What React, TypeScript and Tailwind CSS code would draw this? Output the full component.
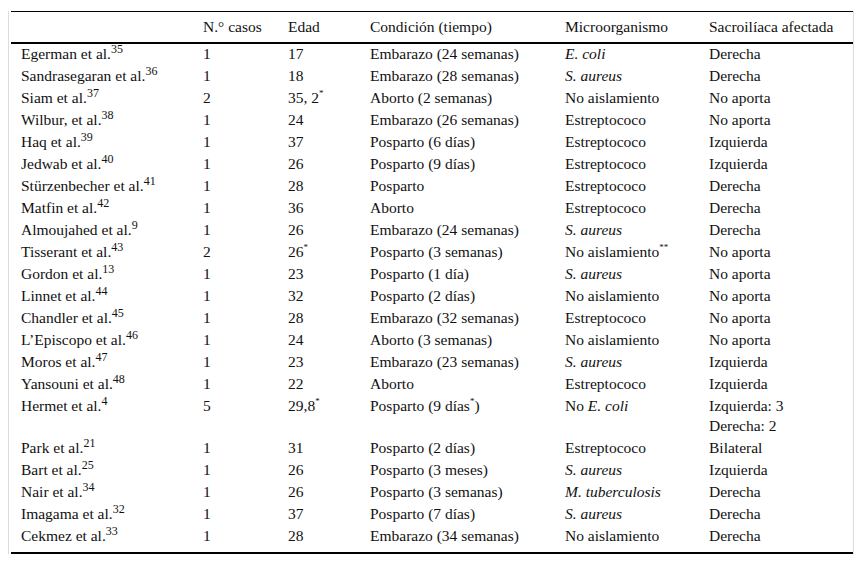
import type { ReactNode } from 'react'

type Row = {
  author: string
  refNum: string
  cases: string
  age: ReactNode
  condition: ReactNode
  organism: ReactNode
  side: ReactNode
}

const Star = ({ n = 1 }: { n?: number }) => (
  <sup className="text-[9px] -top-[0.8em]">{'*'.repeat(n)}</sup>
)

const rows: Row[] = [
  { author: 'Egerman et al.', refNum: '35', cases: '1', age: '17', condition: 'Embarazo (24 semanas)', organism: <i>E. coli</i>, side: 'Derecha' },
  { author: 'Sandrasegaran et al.', refNum: '36', cases: '1', age: '18', condition: 'Embarazo (28 semanas)', organism: <i>S. aureus</i>, side: 'Derecha' },
  { author: 'Siam et al.', refNum: '37', cases: '2', age: <>35, 2<Star /></>, condition: 'Aborto (2 semanas)', organism: 'No aislamiento', side: 'No aporta' },
  { author: 'Wilbur, et al.', refNum: '38', cases: '1', age: '24', condition: 'Embarazo (26 semanas)', organism: 'Estreptococo', side: 'No aporta' },
  { author: 'Haq et al.', refNum: '39', cases: '1', age: '37', condition: 'Posparto (6 días)', organism: 'Estreptococo', side: 'Izquierda' },
  { author: 'Jedwab et al.', refNum: '40', cases: '1', age: '26', condition: 'Posparto (9 días)', organism: 'Estreptococo', side: 'Izquierda' },
  { author: 'Stürzenbecher et al.', refNum: '41', cases: '1', age: '28', condition: 'Posparto', organism: 'Estreptococo', side: 'Derecha' },
  { author: 'Matfin et al.', refNum: '42', cases: '1', age: '36', condition: 'Aborto', organism: 'Estreptococo', side: 'Derecha' },
  { author: 'Almoujahed et al.', refNum: '9', cases: '1', age: '26', condition: 'Embarazo (24 semanas)', organism: <i>S. aureus</i>, side: 'Derecha' },
  { author: 'Tisserant et al.', refNum: '43', cases: '2', age: <>26<Star /></>, condition: 'Posparto (3 semanas)', organism: <>No aislamiento<Star n={2} /></>, side: 'No aporta' },
  { author: 'Gordon et al.', refNum: '13', cases: '1', age: '23', condition: 'Posparto (1 día)', organism: <i>S. aureus</i>, side: 'No aporta' },
  { author: 'Linnet et al.', refNum: '44', cases: '1', age: '32', condition: 'Posparto (2 días)', organism: 'No aislamiento', side: 'No aporta' },
  { author: 'Chandler et al.', refNum: '45', cases: '1', age: '28', condition: 'Embarazo (32 semanas)', organism: 'Estreptococo', side: 'No aporta' },
  { author: 'L’Episcopo et al.', refNum: '46', cases: '1', age: '24', condition: 'Aborto (3 semanas)', organism: 'No aislamiento', side: 'No aporta' },
  { author: 'Moros et al.', refNum: '47', cases: '1', age: '23', condition: 'Embarazo (23 semanas)', organism: <i>S. aureus</i>, side: 'Izquierda' },
  { author: 'Yansouni et al.', refNum: '48', cases: '1', age: '22', condition: 'Aborto', organism: 'Estreptococo', side: 'Izquierda' },
  {
    author: 'Hermet et al.',
    refNum: '4',
    cases: '5',
    age: <>29,8<Star /></>,
    condition: <>Posparto (9 días<Star />)</>,
    organism: <>No <i>E. coli</i></>,
    side: <>Izquierda: 3<br />Derecha: 2</>,
  },
  { author: 'Park et al.', refNum: '21', cases: '1', age: '31', condition: 'Posparto (2 días)', organism: 'Estreptococo', side: 'Bilateral' },
  { author: 'Bart et al.', refNum: '25', cases: '1', age: '26', condition: 'Posparto (3 meses)', organism: <i>S. aureus</i>, side: 'Izquierda' },
  { author: 'Nair et al.', refNum: '34', cases: '1', age: '26', condition: 'Posparto (3 semanas)', organism: <i>M. tuberculosis</i>, side: 'Derecha' },
  { author: 'Imagama et al.', refNum: '32', cases: '1', age: '37', condition: 'Posparto (7 días)', organism: <i>S. aureus</i>, side: 'Derecha' },
  { author: 'Cekmez et al.', refNum: '33', cases: '1', age: '28', condition: 'Embarazo (34 semanas)', organism: 'No aislamiento', side: 'Derecha' },
]

const headers = ['', 'N.° casos', 'Edad', 'Condición (tiempo)', 'Microorganismo', 'Sacroilíaca afectada']

export default function App() {
  return (
    <div className="w-[865px] h-[565px] bg-white pt-[11px] pl-[8px] font-['Liberation_Serif','Times_New_Roman',serif] text-[15.5px] leading-[20px] text-[#111]">
      <div className="w-[846px] border-x border-[#dcdcdc] pl-[2px]">
        <table className="w-[842px] table-fixed border-collapse text-left">
          <colgroup>
            <col className="w-[182px]" />
            <col className="w-[85px]" />
            <col className="w-[82px]" />
            <col className="w-[195px]" />
            <col className="w-[144px]" />
            <col className="w-[154px]" />
          </colgroup>
          <thead>
            <tr className="border-t border-b-2 border-black">
              {headers.map((h, i) => (
                <th key={i} className="pl-[10px] pt-[5px] pb-[5px] font-normal whitespace-nowrap">
                  {h}
                </th>
              ))}
            </tr>
          </thead>
          <tbody className="border-b-2 border-black">
            {rows.map((r, i) => {
              const last = i === rows.length - 1
              const cell = last ? 'pl-[10px] pt-0 pb-[6px] align-top whitespace-nowrap' : 'pl-[10px] pt-0 pb-[2px] align-top whitespace-nowrap'
              return (
                <tr key={r.author}>
                  <td className={cell}>
                    {r.author}
                    <sup className="text-[12px]">{r.refNum}</sup>
                  </td>
                  <td className={cell}>{r.cases}</td>
                  <td className={cell}>{r.age}</td>
                  <td className={cell}>{r.condition}</td>
                  <td className={cell}>{r.organism}</td>
                  <td className={cell}>{r.side}</td>
                </tr>
              )
            })}
          </tbody>
        </table>
      </div>
    </div>
  )
}
